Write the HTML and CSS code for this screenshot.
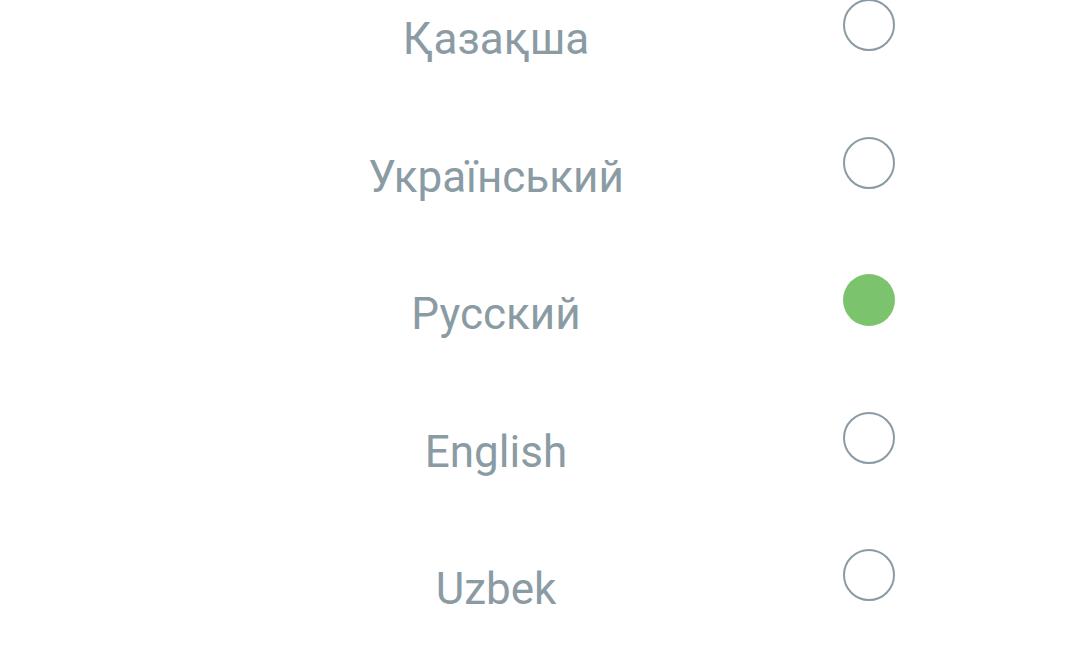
FILE: index.html
```html
<!DOCTYPE html>
<html>
<head>
<meta charset="utf-8">
<link rel="stylesheet" href="styles.css">
</head>
<body>
<ul class="langs">
  <li class="row"><span class="label">Қазақша</span><span class="radio"></span></li>
  <li class="row"><span class="label">Український</span><span class="radio"></span></li>
  <li class="row"><span class="label">Русский</span><span class="radio radio--on"></span></li>
  <li class="row"><span class="label">English</span><span class="radio"></span></li>
  <li class="row"><span class="label">Uzbek</span><span class="radio"></span></li>
</ul>
</body>
</html>
```
FILE: styles.css
```css
html, body {
  margin: 0;
  padding: 0;
  background: #ffffff;
  overflow: hidden;
}
.langs {
  list-style: none;
  margin: -1px 0 0 0;
  padding: 0;
  font-family: Roboto, "Noto Sans", sans-serif;
}
.row {
  display: flex;
  align-items: flex-start;
  height: 137.5px;
}
.label {
  box-sizing: border-box;
  width: 843px;
  padding-left: 149px;
  padding-top: 16px;
  text-align: center;
  font-size: 44px;
  line-height: 49px;
  color: #8a9ba4;
}
.radio {
  box-sizing: border-box;
  width: 52px;
  height: 52px;
  border-radius: 50%;
  border: 2px solid #8a9ba4;
}
.radio--on {
  border: none;
  background: #7cc36d;
}
```
